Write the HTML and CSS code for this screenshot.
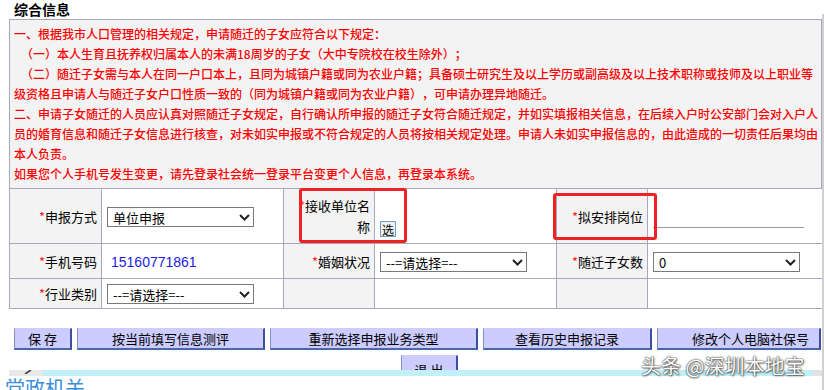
FILE: index.html
```html
<!DOCTYPE html>
<html lang="zh-CN">
<head>
<meta charset="utf-8">
<title>综合信息</title>
<link rel="stylesheet" href="styles.css">
</head>
<body>
<div class="page">
  <h2 class="title">综合信息</h2>
  <div class="notice">
    <div>一、根据我市人口管理的相关规定，申请随迁的子女应符合以下规定：</div>
    <div class="indent">（一）本人生育且抚养权归属本人的未满18周岁的子女（大中专院校在校生除外）；</div>
    <div class="indent">（二）随迁子女需与本人在同一户口本上，且同为城镇户籍或同为农业户籍；具备硕士研究生及以上学历或副高级及以上技术职称或技师及以上职业等级资格且申请人与随迁子女户口性质一致的（同为城镇户籍或同为农业户籍），可申请办理异地随迁。</div>
    <div>二、申请子女随迁的人员应认真对照随迁子女规定，自行确认所申报的随迁子女符合随迁规定，并如实填报相关信息，在后续入户时公安部门会对入户人员的婚育信息和随迁子女信息进行核查，对未如实申报或不符合规定的人员将按相关规定处理。申请人未如实申报信息的，由此造成的一切责任后果均由本人负责。</div>
    <div>如果您个人手机号发生变更，请先登录社会统一登录平台变更个人信息，再登录本系统。</div>
  </div>
  <table class="form">
    <colgroup>
      <col class="c1"><col class="c2"><col class="c3"><col class="c4"><col class="c5"><col class="c6">
    </colgroup>
    <tr class="r1">
      <td class="lbl"><span class="req">*</span>申报方式</td>
      <td class="val"><span class="sel"><select><option>单位申报</option></select><svg class="chev" width="11" height="7" viewBox="0 0 11 7"><path d="M1 1 L5.5 5.5 L10 1" fill="none" stroke="#222" stroke-width="2"/></svg></span></td>
      <td class="lbl wrap"><span class="req">*</span>接收单位名称</td>
      <td class="val bottom"><button class="pick">选</button></td>
      <td class="lbl"><span class="req">*</span>拟安排岗位</td>
      <td class="val"><input class="line" type="text"></td>
    </tr>
    <tr class="r2">
      <td class="lbl"><span class="req">*</span>手机号码</td>
      <td class="val"><span class="phone">15160771861</span></td>
      <td class="lbl"><span class="req">*</span>婚姻状况</td>
      <td class="val"><span class="sel"><select><option>--=请选择=--</option></select><svg class="chev" width="11" height="7" viewBox="0 0 11 7"><path d="M1 1 L5.5 5.5 L10 1" fill="none" stroke="#222" stroke-width="2"/></svg></span></td>
      <td class="lbl"><span class="req">*</span>随迁子女数</td>
      <td class="val"><span class="sel"><select><option>0</option></select><svg class="chev" width="11" height="7" viewBox="0 0 11 7"><path d="M1 1 L5.5 5.5 L10 1" fill="none" stroke="#222" stroke-width="2"/></svg></span></td>
    </tr>
    <tr class="r3">
      <td class="lbl"><span class="req">*</span>行业类别</td>
      <td class="val"><span class="sel"><select><option>--=请选择=--</option></select><svg class="chev" width="11" height="7" viewBox="0 0 11 7"><path d="M1 1 L5.5 5.5 L10 1" fill="none" stroke="#222" stroke-width="2"/></svg></span></td>
      <td class="lbl"></td>
      <td class="val"></td>
      <td class="lbl"></td>
      <td class="val"></td>
    </tr>
  </table>
  <div class="actions">
    <button class="btn b1">保 存</button>
    <button class="btn b2">按当前填写信息测评</button>
    <button class="btn b3">重新选择申报业务类型</button>
    <button class="btn b4">查看历史申报记录</button>
    <button class="btn b5">修改个人电脑社保号</button>
  </div>
  <div class="actions2">
    <button class="btn exit">退 出</button>
  </div>
</div>
<div class="footbar">
  <span class="tab"><svg width="8" height="4" viewBox="0 0 8 4"><path d="M1 4 L7 0" stroke="#444" stroke-width="1.6"/></svg></span>
  <span class="cyan"></span>
  <span class="grayend"></span>
</div>
<div class="section">党政机关</div>

<div class="hl hl1"></div>
<div class="hl hl2"></div>
<div class="scroll"></div>
<div class="mark">头条 @深圳本地宝</div>
</body>
</html>
```
FILE: styles.css
```css
html, body {
  margin: 0;
  padding: 0;
  background: #fff;
}
body {
  width: 824px;
  height: 390px;
  overflow: hidden;
  position: relative;
  font-family: "Noto Sans CJK SC", "Noto Sans", sans-serif;
  color: #000;
  text-spacing-trim: space-all;
}
.page {
  margin-left: 9px;
  width: 813px;
}
.title {
  margin: 0;
  padding-left: 5px;
  height: 19px;
  font-size: 14px;
  line-height: 18px;
  font-weight: 700;
}
.notice {
  box-sizing: border-box;
  width: 813px;
  border: 1px solid #a7a9b8;
  border-bottom: none;
  background: #f3f3f3;
  padding: 4px 0 4px 4px;
  color: #ff0000;
  font-size: 12px;
  font-weight: 500;
  line-height: 20px;
}
.notice .indent {
  text-indent: 7px;
}
.form {
  width: 813px;
  border-collapse: collapse;
  table-layout: fixed;
  font-size: 13px;
}
.form td {
  border: 1px solid #a7a9b8;
  padding: 0;
  vertical-align: middle;
}
.c1 { width: 92px; }
.c2 { width: 182px; }
.c3 { width: 91px; }
.c4 { width: 182px; }
.c5 { width: 91px; }
.c6 { width: 175px; }
.r1 { height: 55px; }
.r2 { height: 35px; }
.r3 { height: 30px; }
.lbl {
  background: #f3f3f3;
  text-align: right;
  padding-right: 4px !important;
  line-height: 21px;
}
.lbl.wrap {
  padding-left: 5px !important;
}
.req {
  color: #ff2020;
}
.val {
  background: #fff;
  padding-left: 5px !important;
}
.val.bottom {
  vertical-align: bottom;
  padding-bottom: 6px !important;
}
.sel {
  position: relative;
  display: inline-block;
  vertical-align: middle;
}
.sel select {
  appearance: none;
  -webkit-appearance: none;
  box-sizing: border-box;
  width: 147px;
  height: 20px;
  border: 1px solid #7a7a7a;
  border-radius: 0;
  background: #fff;
  padding: 0 0 0 5px;
  margin: 0;
  font-family: "Noto Sans CJK SC", sans-serif;
  font-size: 13px;
  color: #000;
}
.sel .chev {
  position: absolute;
  right: 4px;
  top: 7px;
  pointer-events: none;
}
.phone {
  color: #1c1ce0;
  font-family: "Liberation Sans", Arial, sans-serif;
  font-size: 14px;
  padding-left: 4px;
}
.pick {
  box-sizing: border-box;
  width: 16px;
  height: 16px;
  padding: 0;
  margin: 0;
  border: 1px solid #6e9fc4;
  background: #eef0f2;
  font-family: "Noto Sans CJK SC", sans-serif;
  font-size: 12px;
  line-height: 13px;
  color: #000;
  display: block;
}
.line {
  box-sizing: border-box;
  width: 151px;
  height: 22px;
  border: none;
  border-bottom: 1px solid #9a9a9a;
  background: transparent;
  margin: 0;
  padding: 0;
  vertical-align: middle;
  position: relative;
  top: 1px;
}
.actions {
  display: flex;
  gap: 5px;
  margin-top: 19px;
  padding-left: 5px;
}
.btn {
  box-sizing: border-box;
  height: 22px;
  margin: 0;
  padding: 0;
  background: #ccccff;
  border-style: solid;
  border-width: 1px 2px 2px 1px;
  border-color: #ccccff #3a4f9e #4a66ad #7f8fd0;
  font-family: "Noto Sans CJK SC", sans-serif;
  font-size: 13px;
  line-height: 18px;
  color: #000;
  text-align: center;
}
.b1 { width: 58px; }
.b2 { width: 188px; }
.b3 { width: 208px; }
.b4 { width: 169px; }
.b5 { width: 164px; padding-left: 24px; }
.actions2 {
  margin-top: 5px;
  height: 15px;
  overflow: hidden;
  padding-left: 392px;
}
.exit {
  width: 57px;
  display: block;
  line-height: 20px;
  padding-top: 4px;
  height: 24px;
}
.footbar {
  display: flex;
  height: 6px;
  margin-left: 9px;
}
.footbar .tab {
  width: 34px;
  background: #e8e8e8;
  display: flex;
  justify-content: center;
  align-items: flex-start;
}
.footbar .tab svg { display: block; margin-left: 4px; }
.footbar .cyan {
  width: 770px;
  background: #c2f0f8;
}
.footbar .grayend {
  flex: 1;
  background: #e2e2e2;
}
.section {
  padding-left: 5px;
  font-size: 20px;
  line-height: 26px;
  color: #3c8edb;
  margin-top: -1px;
}
.hl {
  position: absolute;
  box-sizing: border-box;
  border: 3px solid #ee2222;
  border-radius: 3px;
}
.hl1 { left: 299px; top: 188px; width: 108px; height: 55px; }
.hl2 { left: 553px; top: 193px; width: 104px; height: 47px; }
.scroll {
  position: absolute;
  left: 822px;
  top: 14px;
  width: 2px;
  height: 376px;
  background: #d0d0d0;
}
.mark {
  position: absolute;
  left: 641px;
  top: 352px;
  font-family: "Noto Sans CJK SC", sans-serif;
  font-weight: 400;
  font-size: 20px;
  line-height: 28px;
  color: #fff;
  white-space: nowrap;
  text-shadow: 0 0 1px #333, 0 0 2px rgba(0,0,0,0.7), 1px 1px 2px rgba(0,0,0,0.5);
}
```
